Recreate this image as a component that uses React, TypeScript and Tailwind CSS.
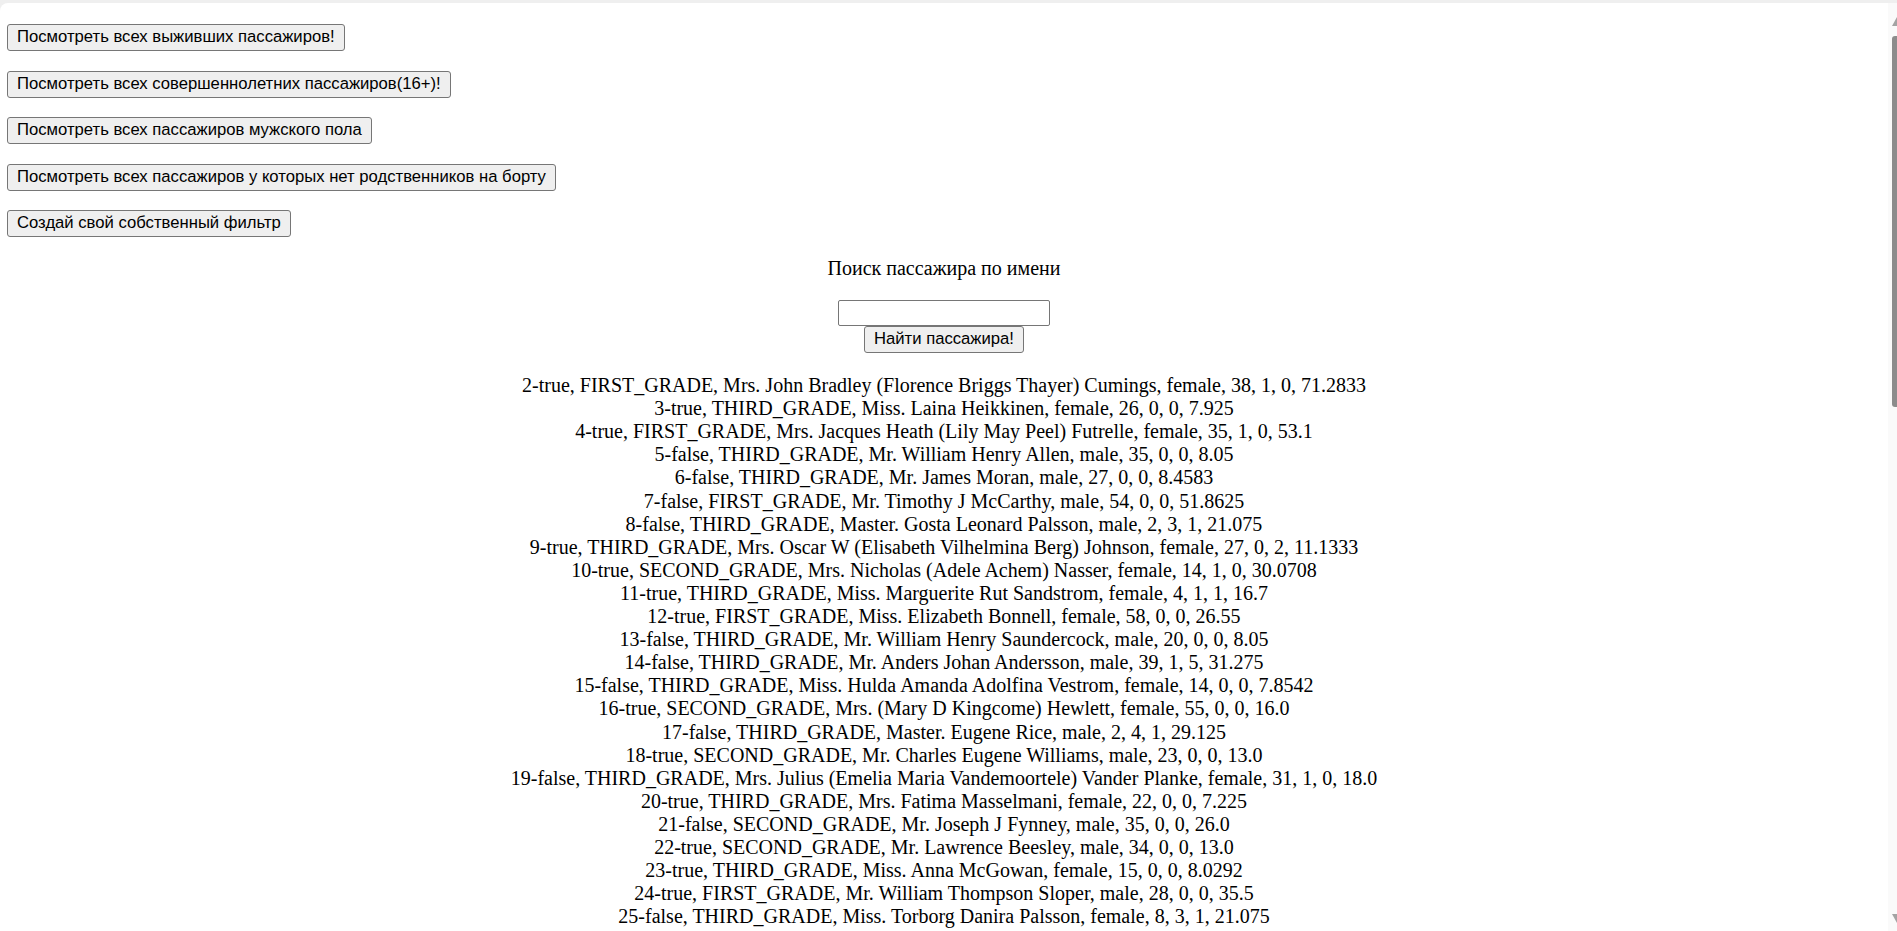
import React from 'react';

const filters = [
  'Посмотреть всех выживших пассажиров!',
  'Посмотреть всех совершеннолетних пассажиров(16+)!',
  'Посмотреть всех пассажиров мужского пола',
  'Посмотреть всех пассажиров у которых нет родственников на борту',
  'Создай свой собственный фильтр',
];

const passengers = [
  '2-true, FIRST_GRADE, Mrs. John Bradley (Florence Briggs Thayer) Cumings, female, 38, 1, 0, 71.2833',
  '3-true, THIRD_GRADE, Miss. Laina Heikkinen, female, 26, 0, 0, 7.925',
  '4-true, FIRST_GRADE, Mrs. Jacques Heath (Lily May Peel) Futrelle, female, 35, 1, 0, 53.1',
  '5-false, THIRD_GRADE, Mr. William Henry Allen, male, 35, 0, 0, 8.05',
  '6-false, THIRD_GRADE, Mr. James Moran, male, 27, 0, 0, 8.4583',
  '7-false, FIRST_GRADE, Mr. Timothy J McCarthy, male, 54, 0, 0, 51.8625',
  '8-false, THIRD_GRADE, Master. Gosta Leonard Palsson, male, 2, 3, 1, 21.075',
  '9-true, THIRD_GRADE, Mrs. Oscar W (Elisabeth Vilhelmina Berg) Johnson, female, 27, 0, 2, 11.1333',
  '10-true, SECOND_GRADE, Mrs. Nicholas (Adele Achem) Nasser, female, 14, 1, 0, 30.0708',
  '11-true, THIRD_GRADE, Miss. Marguerite Rut Sandstrom, female, 4, 1, 1, 16.7',
  '12-true, FIRST_GRADE, Miss. Elizabeth Bonnell, female, 58, 0, 0, 26.55',
  '13-false, THIRD_GRADE, Mr. William Henry Saundercock, male, 20, 0, 0, 8.05',
  '14-false, THIRD_GRADE, Mr. Anders Johan Andersson, male, 39, 1, 5, 31.275',
  '15-false, THIRD_GRADE, Miss. Hulda Amanda Adolfina Vestrom, female, 14, 0, 0, 7.8542',
  '16-true, SECOND_GRADE, Mrs. (Mary D Kingcome) Hewlett, female, 55, 0, 0, 16.0',
  '17-false, THIRD_GRADE, Master. Eugene Rice, male, 2, 4, 1, 29.125',
  '18-true, SECOND_GRADE, Mr. Charles Eugene Williams, male, 23, 0, 0, 13.0',
  '19-false, THIRD_GRADE, Mrs. Julius (Emelia Maria Vandemoortele) Vander Planke, female, 31, 1, 0, 18.0',
  '20-true, THIRD_GRADE, Mrs. Fatima Masselmani, female, 22, 0, 0, 7.225',
  '21-false, SECOND_GRADE, Mr. Joseph J Fynney, male, 35, 0, 0, 26.0',
  '22-true, SECOND_GRADE, Mr. Lawrence Beesley, male, 34, 0, 0, 13.0',
  '23-true, THIRD_GRADE, Miss. Anna McGowan, female, 15, 0, 0, 8.0292',
  '24-true, FIRST_GRADE, Mr. William Thompson Sloper, male, 28, 0, 0, 35.5',
  '25-false, THIRD_GRADE, Miss. Torborg Danira Palsson, female, 8, 3, 1, 21.075',
  '26-true, THIRD_GRADE, Mrs. Carl Oscar (Selma Augusta Emilia Johansson) Asplund, female, 38, 1, 5, 31.3875',
];

function Scrollbar() {
  return (
    <div className="w-[9px] shrink-0 bg-[#fafafa] flex flex-col items-end">
      <svg width="5" height="9" viewBox="0 0 5 9" className="mt-[14px]">
        <polygon points="5,0 5,9 0,9" fill="#a3a3a3" />
      </svg>
      <div className="mt-[10px] w-[5px] h-[371px] bg-[#8c8c8c] rounded-l-[3px]" />
      <div className="flex-1" />
      <svg width="5" height="9" viewBox="0 0 5 9" className="mb-[8px]">
        <polygon points="0,0 5,0 5,9" fill="#a3a3a3" />
      </svg>
    </div>
  );
}

export default function App() {
  return (
    <div className="h-[931px] w-full overflow-hidden bg-[#efefef] pt-[3px] flex flex-col">
      <div className="flex-1 flex bg-white rounded-tl-[8px] overflow-hidden">
        <main className="flex-1 min-w-0 overflow-hidden pt-[21px] text-black">
          {/* Filter buttons */}
          <div className="flex flex-col items-start gap-[19.5px] pl-[7px] font-['Liberation_Sans',Arial,sans-serif]">
            {filters.map((label) => (
              <button
                key={label}
                className="h-[27px] px-[9px] bg-[#efefef] border border-[#767676] rounded-[3px] text-[16.67px] leading-none whitespace-nowrap"
              >
                {label}
              </button>
            ))}
          </div>

          {/* Search */}
          <div className="flex flex-col items-center font-['Liberation_Serif','Times_New_Roman',serif] text-[20px] leading-[23.09px]">
            <p className="mt-[20px]">Поиск пассажира по имени</p>
            <input
              type="text"
              className="mt-[20px] w-[212px] h-[26px] bg-white border border-[#767676] rounded-[2px]"
            />
            <button className="h-[27px] px-[9px] bg-[#efefef] border border-[#767676] rounded-[3px] font-['Liberation_Sans',Arial,sans-serif] text-[16.67px] leading-none">
              Найти пассажира!
            </button>

            {/* Passenger list */}
            <div className="mt-[21px] flex flex-col items-center">
              {passengers.map((row) => (
                <div key={row} className="whitespace-nowrap">
                  {row}
                </div>
              ))}
            </div>
          </div>
        </main>
        <Scrollbar />
      </div>
    </div>
  );
}
